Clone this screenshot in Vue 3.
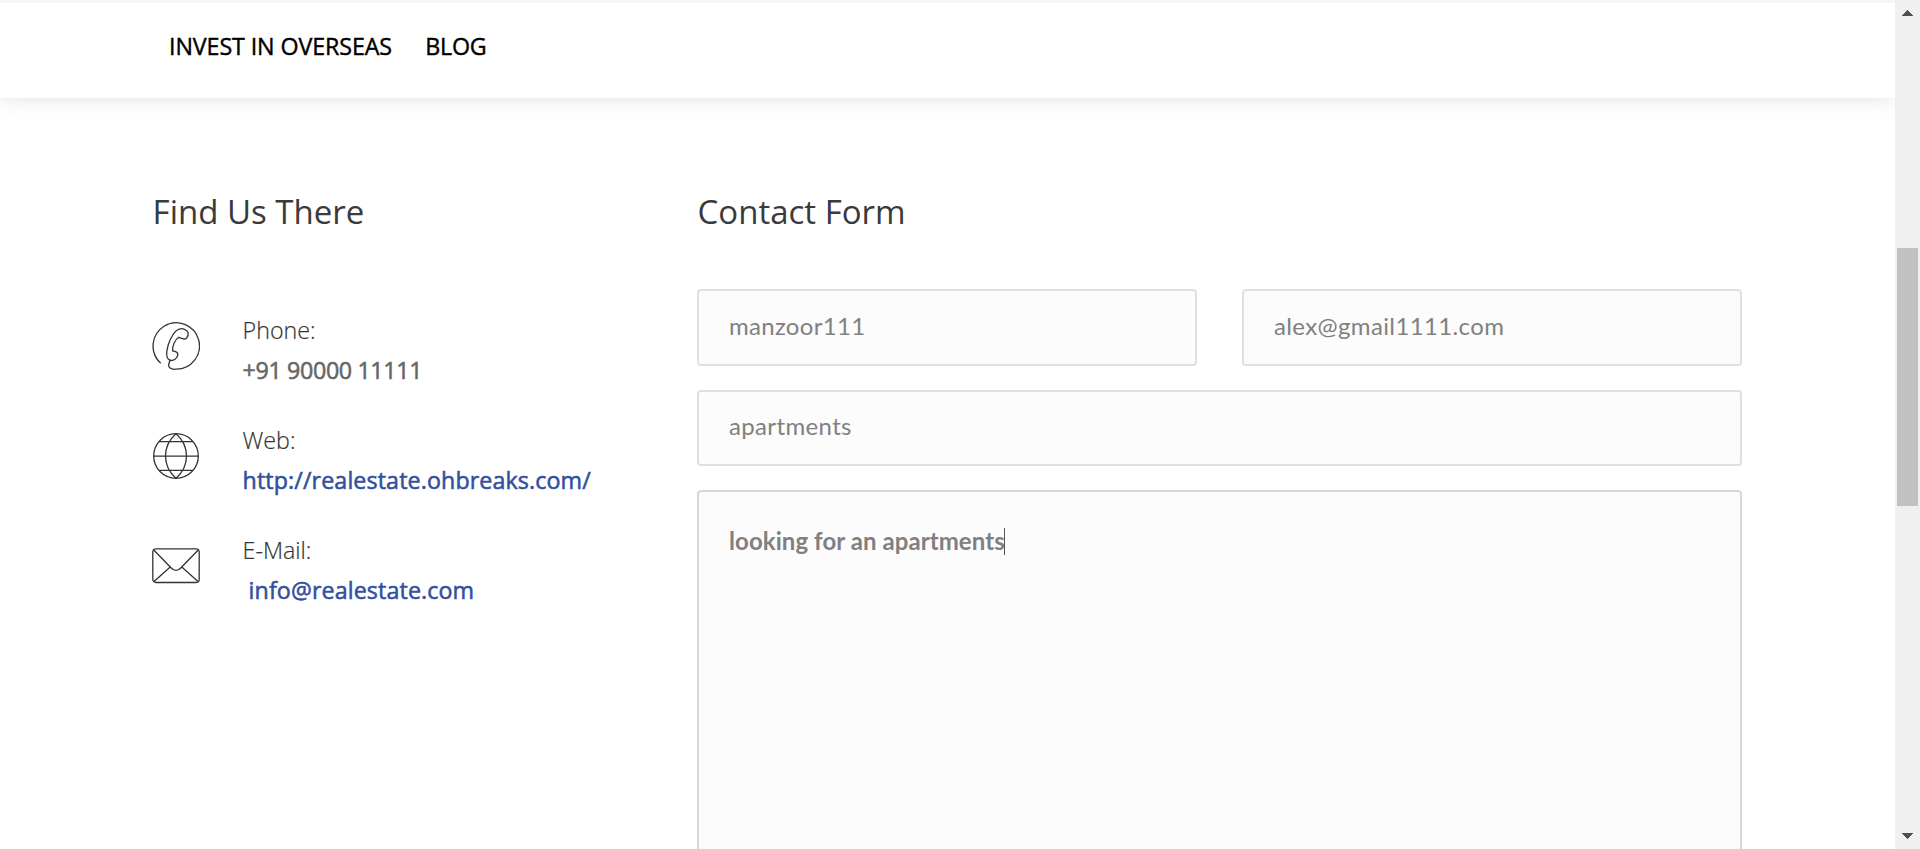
<script setup>
const contacts = [
  { icon: 'phone', label: 'Phone:', value: '+91 90000 11111', link: false },
  { icon: 'web', label: 'Web:', value: 'http://realestate.ohbreaks.com/', link: true },
  { icon: 'mail', label: 'E-Mail:', value: 'info@realestate.com', link: true },
]
</script>

<template>
  <div class="window">
    <div class="page">
      <header class="header">
        <nav class="nav">
          <a class="nav-invest">INVEST IN OVERSEAS</a>
          <a class="nav-blog">BLOG</a>
        </nav>
      </header>
      <main class="content">
        <section class="find">
          <h2>Find Us There</h2>
          <ul class="contacts">
            <li v-for="c in contacts" :key="c.icon" class="contact">
              <svg v-if="c.icon === 'phone'" class="icon" viewBox="0 0 48 48">
                <path d="M8.7 41.2A23.2 23.2 0 1 1 24 47.2C19 47.8 15.5 45.5 17 41.5Q17.3 39.5 18.5 38" />
                <path d="M34.5 16.2C37.5 12 36.5 9 32.5 7.3C27.5 5.2 22.5 8.7 18.3 17.5C14.5 25.5 13.7 34 16 36.7C18.5 39.5 22.5 39 24.7 35.5C27.2 31.5 25.5 29.4 20.6 28.8C20.2 24 22.8 17.7 26.8 15.3C30.3 16.8 32.3 18.2 34.5 16.2Z" />
              </svg>
              <svg v-else-if="c.icon === 'web'" class="icon" viewBox="0 0 48 48">
                <circle cx="24" cy="24" r="22.3" />
                <path d="M1.7 24.2H46.3M7.5 9.7H40.5M7.5 38.4H40.5M24 1.7C10 14 10 34 24 46.3C38 34 38 14 24 1.7Z" />
              </svg>
              <svg v-else class="icon" viewBox="0 0 48 48">
                <rect x=".8" y="6.9" width="46.4" height="33.6" rx="3.2" />
                <path d="M2 8.2L19 25.7Q24 31.2 29 25.7L46 8.2M2 39.5L18.2 24.9M46 39.5L29.8 24.9" />
              </svg>
              <div class="lines">
                <span class="label">{{ c.label }}</span>
                <a :class="['value', 'value-' + c.icon, { link: c.link }]">{{ c.value }}</a>
              </div>
            </li>
          </ul>
        </section>
        <section class="form">
          <h2>Contact Form</h2>
          <div class="fields">
            <div class="row">
              <div class="field first"><span class="t-name">manzoor111</span></div>
              <div class="field first"><span class="t-email">alex@gmail1111.com</span></div>
            </div>
            <div class="field"><span class="t-subject">apartments</span></div>
            <div class="field message"><span class="t-message">looking for an apartments</span><i class="caret"></i></div>
          </div>
        </section>
      </main>
    </div>
    <aside class="scrollbar">
      <svg class="arrow" viewBox="0 0 11 6"><path d="M5 0h1v1h1v1h1v1h1v1h1v1h1v1H0V5h1V4h1V3h1V2h1V1h1z" /></svg>
      <div class="thumb"></div>
      <svg class="arrow down" viewBox="0 0 11 6"><path d="M5 6h1V5h1V4h1V3h1V2h1V1h1V0H0v1h1v1h1v1h1v1h1v1h1z" /></svg>
    </aside>
  </div>
</template>

<style>
body { margin: 0; overflow: hidden; }
</style>

<style scoped>
* { box-sizing: border-box; }
.window { display: flex; width: 1920px; height: 849px; overflow: hidden; background: #fff; font-family: "Open Sans", sans-serif; }
.page { width: 1895px; height: 849px; overflow: hidden; }
.header { height: 98px; border-top: 3px solid #f5f5f5; box-shadow: 0 0 19px rgba(0, 0, 0, .13); padding: 26.7px 0 0 169px; }
.nav { display: flex; gap: 32.3px; font-size: 23.25px; line-height: 33px; color: #000; white-space: nowrap; -webkit-text-stroke: .4px; }
.nav-invest { width: 224px; letter-spacing: -.1px; }
.nav-blog { letter-spacing: -.25px; }
.content { display: flex; padding: 91px 0 0 152.6px; }
.find { width: 544.4px; }
h2 { margin: 0; font-weight: 400; font-size: 33px; line-height: 46px; color: #3a3a3a; white-space: nowrap; }
.form h2 { padding-left: .6px; }
.contacts { list-style: none; margin: 0; padding: 75px 0 0; }
.contact { display: flex; height: 110px; }
.icon { flex: none; width: 48px; height: 48px; margin: 12px 42.4px 0 -.4px; fill: none; stroke: #333; stroke-width: 1.3; }
.lines { display: flex; flex-direction: column; line-height: 40px; font-size: 23.25px; white-space: nowrap; }
.label { font-weight: 300; color: #333; -webkit-text-stroke: .2px; }
.value { color: #666; letter-spacing: -.36px; -webkit-text-stroke: .55px; }
.link { color: #334f9f; letter-spacing: .11px; }
.value-mail { padding-left: 6px; }
.form { width: 1045px; }
.fields { display: flex; flex-direction: column; gap: 24px; padding-top: 54px; }
.row { display: flex; gap: 45px; }
.field { display: flex; align-items: center; width: 100%; height: 76px; padding: 0 30px 4px; border: 2px solid #e0e0e0; border-radius: 4px; background: #fcfcfc; color: #808080; font: 24px/32px Lato, sans-serif; white-space: pre; }
.first { height: 77px; }
.t-name { letter-spacing: .3px; }
.t-email { letter-spacing: .37px; }
.t-subject { letter-spacing: .36px; }
.t-message { letter-spacing: .07px; }
.message { height: 480px; align-items: flex-start; padding-top: 33px; border-color: #d8d8d8; font-weight: 700; }
.caret { width: 1px; height: 27px; margin: 3px 0 0 -1px; background: #555; }
.scrollbar { display: flex; flex-direction: column; align-items: center; width: 25px; height: 849px; background: #f0f0f0; }
.arrow { width: 11px; height: 6px; margin-top: 10px; fill: #505050; shape-rendering: crispEdges; flex: none; }
.thumb { width: 21px; height: 258px; margin-top: 232px; background: #c1c1c1; flex: none; }
.down { margin-top: 327px; }
</style>
